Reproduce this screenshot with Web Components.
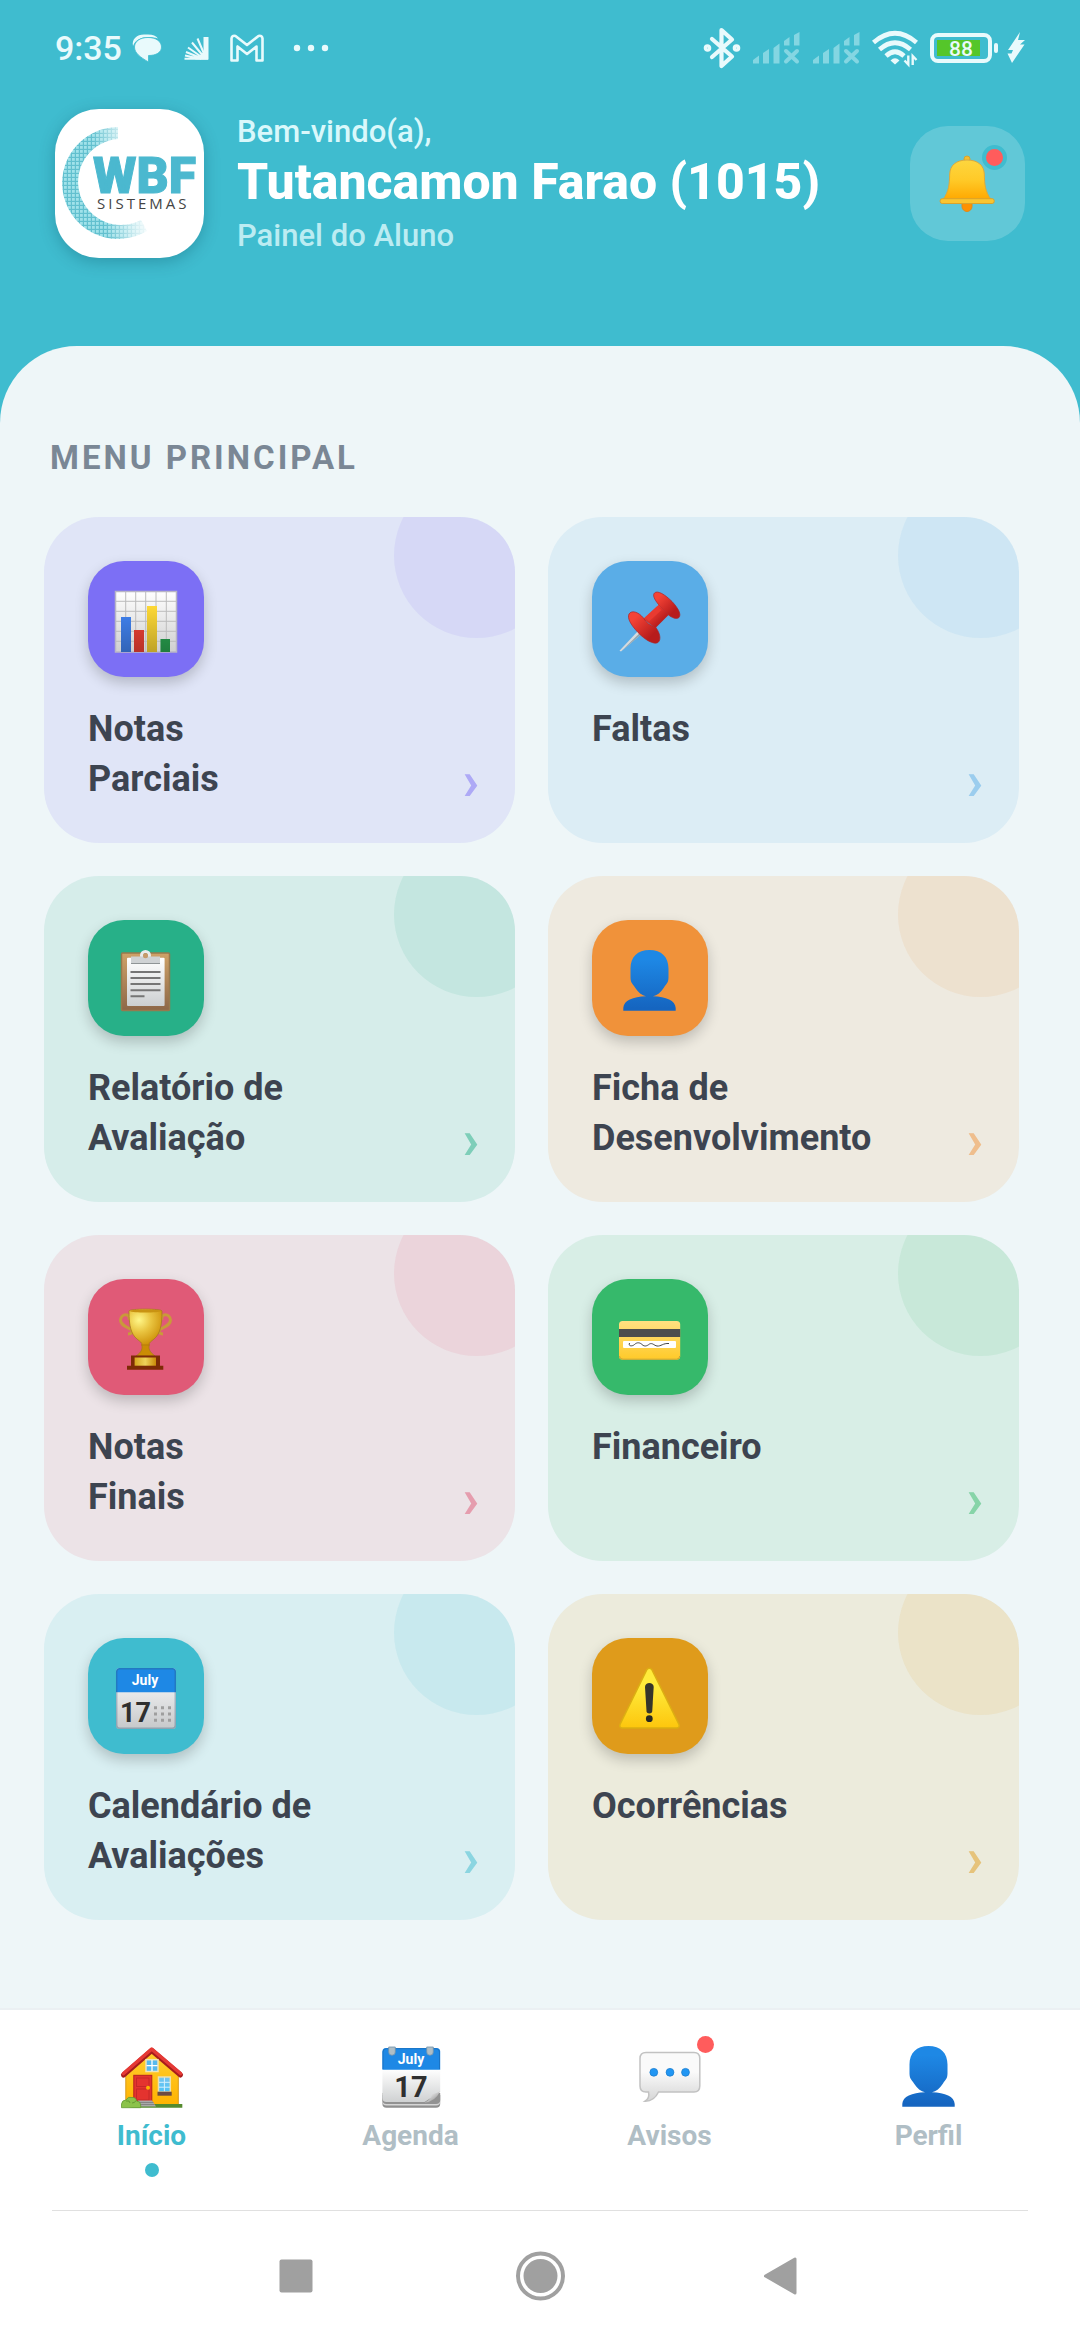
<!DOCTYPE html>
<html lang="pt-BR">
<head>
<meta charset="utf-8">
<meta name="viewport" content="width=device-width, initial-scale=1">
<title>Painel do Aluno</title>
<style>
  body {
    margin: 0;
    min-height: 100vh;
    display: flex;
    flex-direction: column;
    background: #3fbccf;
    font-family: Roboto, "Liberation Sans", sans-serif;
  }
</style>
</head>
<body>

<status-bar time="9:35" battery="88"></status-bar>

<student-header name="Tutancamon Farao (1015)">
  <span slot="greeting">Bem-vindo(a),</span>
  <span slot="role">Painel do Aluno</span>
</student-header>

<menu-sheet>
  <span slot="heading">MENU PRINCIPAL</span>
  <menu-card icon="chart" accent="#7c6ff5" link="#notas-parciais">Notas<br>Parciais</menu-card>
  <menu-card icon="pin" accent="#5aade7" link="#faltas">Faltas</menu-card>
  <menu-card icon="clipboard" accent="#27b088" link="#relatorio">Relatório de<br>Avaliação</menu-card>
  <menu-card icon="person" accent="#f0923a" link="#ficha">Ficha de<br>Desenvolvimento</menu-card>
  <menu-card icon="trophy" accent="#e05a77" link="#notas-finais">Notas<br>Finais</menu-card>
  <menu-card icon="card" accent="#36b96b" link="#financeiro">Financeiro</menu-card>
  <menu-card icon="calendar" accent="#3fbccf" link="#calendario">Calendário de<br>Avaliações</menu-card>
  <menu-card icon="warning" accent="#df9b1b" link="#ocorrencias">Ocorrências</menu-card>
</menu-sheet>

<tab-bar>
  <tab-item icon="house" link="#inicio" active>Início</tab-item>
  <tab-item icon="tearoff" link="#agenda">Agenda</tab-item>
  <tab-item icon="speech" link="#avisos" badge>Avisos</tab-item>
  <tab-item icon="person" link="#perfil">Perfil</tab-item>
</tab-bar>

<system-nav></system-nav>

<script>
// all glyphs share a 64 x 64 box
const GLYPHS = {
  bell: `
    <defs>
      <linearGradient id="g" x1="0" y1="0" x2="0" y2="1"><stop offset="0" stop-color="#fdd63f"/><stop offset=".5" stop-color="#ffca28"/><stop offset="1" stop-color="#ffa800"/></linearGradient>
    </defs>
    <circle cx="31" cy="7" r="3" fill="#f5be2c" stroke="#d9a32c"/>
    <path d="M26 51h10v3.500a5 5 0 0 1-10 0z" fill="#ff9100" stroke="#e08a1c"/>
    <path d="M31 8C20 8 14 13.500 13.700 22C13.300 33 13 39 7 47.500H55C49 39 48.700 33 48.300 22C48 13.500 42 8 31 8Z" fill="url(#g)" stroke="#d9a940"/>
    <rect x="4.200" y="46.700" width="54" height="4.800" rx="2" fill="#fbc530" stroke="#d9a32c"/>`,
  chart: `
    <defs>
      <linearGradient id="p" x1="0" y1="0" x2="0" y2="1"><stop offset="0" stop-color="#fff"/><stop offset="1" stop-color="#cfcfcf"/></linearGradient>
      <linearGradient id="s" x1="0" y1="0" x2="0" y2="1"><stop offset="0" stop-color="#000" stop-opacity="0"/><stop offset="1" stop-color="#000" stop-opacity=".25"/></linearGradient>
    </defs>
    <rect x="1.500" y="1.500" width="61" height="60.500" fill="url(#p)" stroke="#b9b6c6" stroke-width="1.500"/>
    <path d="M11.700 2v60M21.700 2v60M31.700 2v60M42 2v60M52.300 2v60M2 11.300h60M2 21.300h60M2 31.300h60M2 41.300h60M2 51.300h60" stroke="#bcbcbc"/>
    <rect x="7" y="27" width="10" height="35" fill="#4285f4"/>
    <rect x="20" y="40" width="10" height="22" fill="#f44336"/>
    <rect x="33" y="16" width="10" height="46" fill="#fdd835"/>
    <rect x="46.500" y="49" width="9.500" height="13" fill="#2aa852"/>
    <path d="M7 27h10v35H7zM20 40h10v22H20zM33 16h10v46H33zM46.500 49H56v13h-9.500z" fill="url(#s)"/>`,
  pin: `
    <defs>
      <linearGradient id="r" x1="0" y1="0" x2="1" y2="1"><stop offset=".2" stop-color="#f44336"/><stop offset=".75" stop-color="#b71c1c"/></linearGradient>
    </defs>
    <path d="M19.500 41.500L1.500 60.800L3 61.500L23 44.500Z" fill="#d6dbde"/>
    <path d="M21.500 43.300L3 61.500L23 44.500Z" fill="#90a4ae"/>
    <path d="M41 14.500L25 29L37.500 38L50.500 25Z" fill="url(#r)"/>
    <path d="M11 24C13.500 20 20 21.500 25.500 28C28 32.500 32 35.500 37.500 37C42 43 43.500 49.500 40 52.500C36 55 27 50 20 42.500C12.500 34.500 9 28 11 24Z" fill="url(#r)" stroke="#a8252a" stroke-width=".7"/>
    <path d="M36.500 3C39.500 0 47 4.500 54 11.500C60.500 18.500 63.500 24.500 61 27.500C58.500 29.500 54 28 50 24.500L40.500 14.500C36 9 34.500 5 36.500 3Z" fill="url(#r)" stroke="#a8252a" stroke-width=".7"/>
    <path d="M41 15L28 27.500C30 31 33 34.500 36.500 36.500L50 24Z" fill="url(#r)"/>
    <path d="M39 16.500L27.500 27.500L31 31.500L43.500 20Z" fill="#e93a30"/>`,
  clipboard: `
    <defs>
      <linearGradient id="b" x1="0" y1="0" x2="0" y2="1"><stop offset="0" stop-color="#cfa268"/><stop offset="1" stop-color="#8d6748"/></linearGradient>
      <linearGradient id="p" x1="0" y1="0" x2="0" y2="1"><stop offset="0" stop-color="#fff"/><stop offset="1" stop-color="#cccfd1"/></linearGradient>
    </defs>
    <rect x="7.500" y="4" width="48" height="57.500" rx="1" fill="url(#b)" stroke="#96794e" stroke-width="1.500"/>
    <rect x="13" y="8.700" width="37.600" height="48.300" rx="1" fill="url(#p)"/>
    <circle cx="31.500" cy="6.500" r="4" fill="none" stroke="#e8ecec" stroke-width="3"/>
    <rect x="17" y="7.500" width="29" height="7" fill="#cfd2d4"/>
    <circle cx="31.500" cy="6.700" r="2.500" fill="#c69b6b"/>
    <path d="M17 14.500h29" stroke="#8f9496"/>
    <path d="M16.500 23h30M16.500 29h30M16.500 35h30M16.500 41.300h30M16.500 47.300h14" stroke="#757575" stroke-width="2"/>`,
  person: `
    <defs>
      <linearGradient id="u" gradientUnits="userSpaceOnUse" x1="0" y1="1" x2="0" y2="62"><stop offset=".15" stop-color="#1e88e5"/><stop offset=".95" stop-color="#1565c0"/></linearGradient>
    </defs>
    <path d="M31.500 1C19.500 1 12.500 8 12.500 19.500V28.500C12.500 34 15 35 17 38.500C20 43.500 24 46.500 28 47.200C15 47.500 5.500 51.500 5.300 59V61.700H57.700V59C57.500 51.500 48 47.500 35 47.200C39 46.500 43 43.500 46 38.500C48 35 50.500 34 50.500 28.500V19.500C50.500 8 43.500 1 31.500 1Z" fill="url(#u)"/>`,
  trophy: `
    <defs>
      <radialGradient id="c" gradientUnits="userSpaceOnUse" cx="25" cy="12" r="27"><stop offset="0" stop-color="#fff789"/><stop offset=".45" stop-color="#e9c440"/><stop offset="1" stop-color="#cb8c04"/></radialGradient>
      <linearGradient id="l" x1="0" y1="0" x2="1" y2="0"><stop offset="0" stop-color="#d6a61f"/><stop offset=".5" stop-color="#eed25a"/><stop offset="1" stop-color="#c98a08"/></linearGradient>
    </defs>
    <g fill="none" stroke="#c99a3a" stroke-width="3">
      <path d="M15 12C17 5 7 5 6.500 12C6.500 17 12 18.500 17 21.500C20 23.500 17 26 14 26"/>
      <path d="M48 12C46 5 56 5 56.500 12C56.500 17 51 18.500 46 21.500C43 23.500 46 26 49 26"/>
    </g>
    <path d="M15 3C15 .500 48 .500 48 3C48 18 46 26 40 31C37 33.500 35 34.500 35 37V39.500C35 43 38 45.500 41 48H22C25.500 45.500 28 43 28 39.500V37C28 34.500 26 33.500 23 31C17 26 15 18 15 3Z" fill="url(#c)" stroke="#a87b1e" stroke-width=".8"/>
    <path d="M15 3C20 5 43 5 48 3C43 1 20 1 15 3Z" fill="#c99312"/>
    <path d="M27 37h9" stroke="#b67b0c"/>
    <path d="M17 47.500H46V57.700H49.300V61.700H13V57.700H17Z" fill="#7d2b06"/>
    <rect x="20.600" y="49.500" width="21.400" height="8.200" fill="url(#l)"/>`,
  card: `
    <defs>
      <linearGradient id="y" x1="0" y1="0" x2="0" y2="1"><stop offset="0" stop-color="#ffe082"/><stop offset="1" stop-color="#ffca28"/></linearGradient>
    </defs>
    <rect x="1" y="13" width="61.200" height="38.700" rx="3.500" fill="url(#y)"/>
    <path d="M1.500 48Q1.500 51.200 5 51.200H58.500Q61.700 51.200 61.700 48" fill="none" stroke="#c9a53a"/>
    <rect x="1" y="21" width="61.200" height="8" fill="#4d4d4d"/>
    <rect x="5" y="33" width="53" height="7" rx="1" fill="#fff"/>
    <path d="M11.500 35C10 38.500 14.500 38.500 16.500 36.500C19 34 22 34.500 24 36.500C26.500 39 29 38 31.500 36C34.500 34.500 36 37.500 39 38C43 38.500 45 35 51 35.500" fill="none" stroke="#444"/>`,
  calendar: `
    <defs>
      <linearGradient id="p" x1="0" y1="0" x2="0" y2="1"><stop offset="0" stop-color="#fff"/><stop offset="1" stop-color="#c6c8ca"/></linearGradient>
    </defs>
    <rect x="2" y="1" width="60" height="61" rx="3.500" fill="url(#p)"/>
    <path d="M2 25.300V4.500Q2 1 5.500 1H58.500Q62 1 62 4.500V25.300Z" fill="#1e88e5"/>
    <rect x="2.700" y="1.700" width="58.600" height="59.600" rx="3" fill="none" stroke="#2b5f80" stroke-opacity=".35" stroke-width="1.500"/>
    <text x="31" y="18" text-anchor="middle" font-size="14" font-weight="700" fill="#fff">July</text>
    <text x="6" y="55" font-size="27" font-weight="700" fill="#2f2f2f">17</text>
    <path d="M40 40.700h3m4 0h3m4 0h3M40 47h3m4 0h3m4 0h3M40 53.300h3m4 0h3m4 0h3" stroke="#9e9e9e" stroke-width="3"/>`,
  warning: `
    <defs>
      <linearGradient id="w" x1="0" y1="0" x2="0" y2="1"><stop offset=".3" stop-color="#ffeb3b"/><stop offset="1" stop-color="#fdc60d"/></linearGradient>
    </defs>
    <path d="M28.700 2.800Q31.300 -.200 34 2.800L61 57.500Q62 60.700 59 60.900H4Q1 60.700 2 57.500Z" fill="url(#w)" stroke="#dcae12" stroke-width="1.500"/>
    <path d="M27 20C27 14.500 35.700 14.500 35.700 20L34.200 44.500C34 47 28.700 47 28.500 44.500Z" fill="#35352b"/>
    <circle cx="31.300" cy="51.700" r="3.400" fill="#282822"/>`,
  house: `
    <defs>
      <linearGradient id="h" x1="0" y1="0" x2="0" y2="1"><stop offset=".2" stop-color="#ffca28"/><stop offset="1" stop-color="#ffb300"/></linearGradient>
      <linearGradient id="k" x1="0" y1="0" x2="0" y2="1"><stop offset="0" stop-color="#78c4ee"/><stop offset="1" stop-color="#4fc3f7"/></linearGradient>
    </defs>
    <path d="M5.800 27L31.700 5L58.300 27V60H5.800Z" fill="url(#h)" stroke="#d99a1a"/>
    <path d="M3.500 30L31.700 5.500L60.500 30" fill="none" stroke="#a81c1c" stroke-width="5" stroke-linecap="round" stroke-linejoin="round"/>
    <path d="M3.500 28.500L31.700 4L60.500 28.500" fill="none" stroke="#e53935" stroke-width="3.600" stroke-linecap="round" stroke-linejoin="round"/>
    <rect x="26" y="14.700" width="12" height="11.800" fill="#58b9ee" stroke="#efe4b8" stroke-width="1.500"/>
    <path d="M32 15v11M26.500 20.700h11" stroke="#fff" stroke-width="1.300"/>
    <rect x="13.800" y="30.300" width="18" height="26" fill="#e4332f" stroke="#b62020"/>
    <rect x="16.500" y="33" width="12.500" height="8.500" fill="none" stroke="#c62828"/>
    <rect x="16.500" y="44" width="12.500" height="11" fill="none" stroke="#c62828"/>
    <circle cx="28" cy="42.700" r="2" fill="#ffb300"/>
    <rect x="38.500" y="32" width="11.800" height="15" fill="url(#k)" stroke="#ece0b0" stroke-width="1.500"/>
    <path d="M44.400 32.500v14M39 37.300h11M39 42.200h11" stroke="#d6f0fc"/>
    <rect x="37.500" y="46.700" width="14.200" height="4" fill="#6d4c41"/>
    <path d="M33 59H62.300V62.700H8Z" fill="#558b2f"/>
    <path d="M18 55.500H32L36 61.500H18Z" fill="#a9a9a9"/>
    <path d="M18 57.500H33.500M18 59.500H35" stroke="#848484"/>
    <path d="M1.500 62.700V59Q2 55 6 55Q8 51 12 52.500Q16 52 16.500 56Q20.500 56 20.700 60V62.700Z" fill="#8bc34a" stroke="#639c33" stroke-width=".8"/>
    <path d="M6 56Q10 55 10 58M12 58Q15 58 16 55.500" fill="none" stroke="#639c33"/>`,
  tearoff: `
    <defs>
      <linearGradient id="p" x1="0" y1="0" x2="0" y2="1"><stop offset="0" stop-color="#fff"/><stop offset="1" stop-color="#cfd1d2"/></linearGradient>
      <linearGradient id="f" x1="0" y1="0" x2="1" y2="1"><stop offset=".2" stop-color="#f5f5f5"/><stop offset="1" stop-color="#7b7b7b"/></linearGradient>
    </defs>
    <path d="M3.400 50H61.200V58.700Q61.200 62.700 57 62.700H7.500Q3.400 62.700 3.400 58.700Z" fill="#8f8f8f"/>
    <path d="M3.400 50H61.200V56.500Q61.200 60.500 57 60.500H7.500Q3.400 60.500 3.400 56.500Z" fill="#d6d6d6"/>
    <path d="M3.400 48H61.200V55Q61.200 59 57 59H7.500Q3.400 59 3.400 55Z" fill="#929292"/>
    <path d="M3.400 24H61.200V47L45.500 57H7.500Q3.400 57 3.400 53Z" fill="url(#p)"/>
    <path d="M61.200 46.300Q55 49.500 53 49Q52 55 45.700 57.500Q56 57 61.200 46.300Z" fill="url(#f)"/>
    <path d="M3.400 24.700V6.500Q3.400 3 7 3H57.500Q61.200 3 61.200 6.500V24.700Z" fill="#1e88e5"/>
    <path d="M4 24V7Q4 3.700 7.500 3.700H57Q60.500 3.700 60.500 7V24" fill="none" stroke="#1a73c4"/>
    <path d="M9.700 2h6.600V7a3.300 3.300 0 0 1-6.600 0zM47.700 2h6.600V7a3.300 3.300 0 0 1-6.600 0z" fill="#b0bec5" stroke="#6f92ac" stroke-width=".8"/>
    <text x="32" y="18.500" text-anchor="middle" font-size="14" font-weight="700" fill="#fff">July</text>
    <text x="32" y="52" text-anchor="middle" font-size="29" font-weight="700" fill="#2f2f2f">17</text>`,
  speech: `
    <defs>
      <linearGradient id="m" x1="0" y1="0" x2="0" y2="1"><stop offset=".4" stop-color="#fafafa"/><stop offset="1" stop-color="#d5d5d5"/></linearGradient>
    </defs>
    <path d="M8 7.500H56Q61.800 7.500 61.800 13.500V41Q61.800 47 56 47H20.500Q16 56.500 7 56.200Q12 53 10.500 47H8Q2 47 2 41V13.500Q2 7.500 8 7.500Z" fill="url(#m)" stroke="#c2c2c2" stroke-width="1.500"/>
    <g fill="#2196f3" stroke="#1c7fd0" stroke-width=".8"><circle cx="15.800" cy="27.300" r="3.900"/><circle cx="32" cy="27.300" r="3.900"/><circle cx="47.500" cy="27.300" r="3.900"/></g>`
};

class GlyphIcon extends HTMLElement {
  constructor() {
    super();
    this.attachShadow({ mode: "open" });
  }
  connectedCallback() {
    this.shadowRoot.innerHTML = `
<style>
:host { display: block; width: 64px; height: 64px; }
svg { display: block; width: 100%; height: 100%; overflow: visible; }
</style>
<svg viewBox="0 0 64 64" aria-hidden="true">${GLYPHS[this.getAttribute("name")] || ""}</svg>
    `;
  }
}

class StatusBar extends HTMLElement {
  constructor() {
    super();
    this.attachShadow({ mode: "open" });
  }
  connectedCallback() {
    const signal = `
<svg width="48" height="32" viewBox="0 0 48 32" fill="#84d6e2" aria-hidden="true">
  <path d="M1 31.500V28L7 23.500V31.500ZM11 31.500V21L17 17V31.500ZM21.500 31.500V16L27.500 11.500V31.500ZM32 13.500V9L37.500 5V13.500ZM42 13.500V3L47.500 0V13.500Z"/>
  <path d="M34 19L45 29.500M45 19L34 29.500" stroke="#84d6e2" stroke-width="4" stroke-linecap="round"/>
</svg>`;
    this.shadowRoot.innerHTML = `
<style>
:host {
  display: flex;
  justify-content: space-between;
  align-items: center;
  height: 95px;
  padding: 0 55px;
  color: #e9fafc;
}
.side { display: flex; align-items: center; }
.apps { gap: 10px; }
.system { gap: 12px; }
time { font-size: 34px; line-height: 40px; font-weight: 500; }
svg { display: block; overflow: visible; }
.notices { display: flex; align-items: center; gap: 21px; }
.dots { margin-left: 8px; }
.power { display: flex; align-items: center; gap: 9px; }
</style>
<div class="side apps">
  <time>${this.getAttribute("time")}</time>
  <div class="notices">
    <svg width="30" height="28" viewBox="0 0 30 28" fill="currentColor" aria-hidden="true">
      <path d="M1 12C-.5 5 5 .500 12 .500H16C21 .500 24 2 26 4.500C15 1 4 3.500 1 12Z"/>
      <path d="M16 3.500C24 3.500 29.500 7.500 29.500 13C29.500 18.500 24 21.500 16.500 21.500V28C8 23 2.500 19 2.500 13C2.500 7.500 8 3.500 16 3.500Z" stroke="#3fbccf" stroke-width=".8"/>
    </svg>
    <svg width="26" height="24" viewBox="0 0 26 24" fill="currentColor" aria-hidden="true">
      <path d="M20.500 1H25.500V23.500H12L20.500 16Z"/>
      <path d="M22 20L14.500 2.500M21 21L9 6.500M20 22L5 11.500M19 22.500L3 16M18 23L2 19.500M25 22.700L1.500 22.700" stroke="currentColor" stroke-width="2"/>
    </svg>
    <svg width="34" height="28" viewBox="0 0 34 28" fill="none" stroke="currentColor" stroke-width="2.600" stroke-linejoin="round" aria-hidden="true">
      <path d="M1.500 26.500V4.500Q2 1 5.500 2L17 11L28.500 2Q32 1 32.500 4.500V26.500H26.500V12.500L17 20L7.500 12.500V26.500Z"/>
    </svg>
    <svg class="dots" width="36" height="8" viewBox="0 0 36 8" fill="currentColor" aria-hidden="true">
      <circle cx="4" cy="4" r="3.200"/><circle cx="18" cy="4" r="3.200"/><circle cx="32" cy="4" r="3.200"/>
    </svg>
  </div>
</div>
<div class="side system">
  <svg width="36" height="40" viewBox="0 0 36 40" fill="none" stroke="currentColor" stroke-width="4.200" stroke-linejoin="round" stroke-linecap="round" aria-hidden="true">
    <path d="M8 11L28 28.500L17.500 38V2L28 11.500L8 29"/>
    <circle cx="3.500" cy="20" r="1.700"/><circle cx="32.500" cy="20" r="1.700"/>
  </svg>
  ${signal}
  ${signal}
  <svg width="46" height="34" viewBox="0 0 46 34" fill="none" stroke="currentColor" stroke-width="4.600" aria-hidden="true">
    <path d="M1.500 11.500Q23 -7 44.500 11.500M7.500 18.500Q23 5 38.500 18.500M14 25Q23 16.500 32 25"/>
    <path d="M18.500 29.500Q23 25 27.500 29.500L23 33.500Z" fill="currentColor" stroke="none"/>
    <path d="M30.500 28.500H36V24H46V35H34Z" fill="#3fbccf" stroke="none"/>
    <path d="M36.300 24.500V33.500L32.500 29.500M40.700 34V25L44.500 29" stroke-width="2.400"/>
  </svg>
  <div class="power">
    <svg width="68" height="30" viewBox="0 0 68 30" role="img" aria-label="Bateria">
      <rect x="2" y="2" width="58" height="26" rx="6" fill="none" stroke="currentColor" stroke-width="4"/>
      <rect x="64" y="10" width="4" height="10" rx="2" fill="currentColor"/>
      <rect x="7" y="7" width="43" height="16" fill="#55c62a"/>
      <text x="31" y="22.500" text-anchor="middle" font-size="21" font-weight="500" fill="currentColor">${this.getAttribute("battery")}</text>
    </svg>
    <svg width="18" height="31" viewBox="0 0 18 31" fill="currentColor" aria-hidden="true">
      <path d="M13 0L1 18H6L4.500 21.500H.5L5 31L17.500 12.500H13L18 8H11Z"/>
    </svg>
  </div>
</div>
    `;
  }
}

class StudentHeader extends HTMLElement {
  constructor() {
    super();
    this.attachShadow({ mode: "open" });
  }
  connectedCallback() {
    this.shadowRoot.innerHTML = `
<style>
:host {
  display: flex;
  align-items: center;
  gap: 33px;
  padding: 14px 55px 88px;
  color: #fff;
}
.logo {
  flex: none;
  width: 149px;
  height: 149px;
  border-radius: 44px;
  background: #fff;
  box-shadow: 0 4px 16px rgba(0, 60, 80, 0.28);
}
.logo svg { display: block; width: 100%; height: 100%; }
.who { flex: 1; min-width: 0; }
p, h1 { margin: 0; }
p { font-size: 31px; line-height: 38px; font-weight: 500; }
.greeting { color: #d9f8fb; }
.role { color: #bcecf2; }
h1 { margin: 2px 0 6px; font-size: 50px; line-height: 58px; font-weight: 800; }
button {
  position: relative;
  flex: none;
  width: 115px;
  height: 115px;
  padding: 0;
  border: 0;
  border-radius: 38px;
  background: rgba(255, 255, 255, 0.18);
  display: grid;
  place-items: center;
}
.unread {
  position: absolute;
  top: 19px;
  right: 18px;
  width: 17px;
  height: 17px;
  border: 4px solid #3fbccf;
  border-radius: 50%;
  background: #ff5c5c;
}
</style>
<div class="logo">
  <svg viewBox="0 0 149 149" role="img" aria-label="WBF Sistemas">
    <defs>
      <pattern id="mesh" width="4" height="4" patternUnits="userSpaceOnUse">
        <rect width="4" height="4" fill="#62c0cf"/>
        <rect x="1" y="1" width="2.800" height="2.800" fill="#a0e2ea"/>
      </pattern>
      <linearGradient id="fade" gradientUnits="userSpaceOnUse" x1="8" y1="0" x2="90" y2="-12">
        <stop offset=".3" stop-color="#fff"/><stop offset=".6" stop-color="#fff" stop-opacity=".4"/><stop offset=".85" stop-color="#fff" stop-opacity="0"/>
      </linearGradient>
      <mask id="m"><rect width="149" height="149" fill="url(#fade)"/></mask>
    </defs>
    <path mask="url(#m)" fill="url(#mesh)" d="M63 18A56 56 0 1 0 92 122L86 111A43 43 0 1 1 63 30Z"/>
    <text x="38" y="84" font-size="50" font-weight="900" fill="#4bb8cf" stroke="#4bb8cf">WBF</text>
    <text x="42" y="100" font-family="Open Sans, sans-serif" font-size="15" letter-spacing="3" fill="#444">SISTEMAS</text>
  </svg>
</div>
<div class="who">
  <p class="greeting"><slot name="greeting"></slot></p>
  <h1>${this.getAttribute("name")}</h1>
  <p class="role"><slot name="role"></slot></p>
</div>
<button type="button" aria-label="Notificações">
  <glyph-icon name="bell"></glyph-icon>
  <span class="unread"></span>
</button>
    `;
  }
}

class MenuSheet extends HTMLElement {
  constructor() {
    super();
    this.attachShadow({ mode: "open" });
  }
  connectedCallback() {
    this.shadowRoot.innerHTML = `
<style>
:host {
  display: block;
  flex: 1;
  padding: 92px 61px 88px 44px;
  border-radius: 77px 77px 0 0;
  background: #eef6f8;
}
h2 {
  margin: 0 6px 39px;
  font-size: 33px;
  line-height: 40px;
  font-weight: 700;
  letter-spacing: 3px;
  color: #7a8795;
}
.grid { display: grid; grid-template-columns: 1fr 1fr; gap: 33px; }
</style>
<h2><slot name="heading"></slot></h2>
<div class="grid"><slot></slot></div>
    `;
  }
}

class MenuCard extends HTMLElement {
  constructor() {
    super();
    this.attachShadow({ mode: "open" });
  }
  connectedCallback() {
    this.style.setProperty("--accent", this.getAttribute("accent"));
    this.shadowRoot.innerHTML = `
<style>
:host { display: block; }
a {
  position: relative;
  display: block;
  box-sizing: border-box;
  height: 100%;
  padding: 44px 44px 39px;
  border-radius: 55px;
  overflow: hidden;
  text-decoration: none;
  color: #3d4450;
  background: color-mix(in srgb, var(--accent) 12%, transparent);
}
.bubble {
  position: absolute;
  top: -44px;
  right: -44px;
  width: 165px;
  height: 165px;
  border-radius: 50%;
  background: var(--accent);
  opacity: 0.1;
}
.tile {
  box-sizing: border-box;
  width: 116px;
  height: 116px;
  padding: 29px 26px 0;
  border-radius: 36px;
  background: var(--accent);
  box-shadow: 0 6px 14px rgba(0, 0, 0, 0.2);
}
.title {
  display: block;
  min-height: 100px;
  margin-top: 27px;
  font-size: 36px;
  line-height: 50px;
  font-weight: 700;
}
.go {
  position: absolute;
  right: 36px;
  bottom: 31px;
  font-size: 55px;
  line-height: 64px;
  font-weight: 700;
  color: var(--accent);
  opacity: 0.5;
}
</style>
<a href="${this.getAttribute("link")}">
  <div class="bubble"></div>
  <div class="tile"><glyph-icon name="${this.getAttribute("icon")}"></glyph-icon></div>
  <span class="title"><slot></slot></span>
  <span class="go" aria-hidden="true">›</span>
</a>
    `;
  }
}

class TabBar extends HTMLElement {
  constructor() {
    super();
    this.attachShadow({ mode: "open" });
  }
  connectedCallback() {
    this.shadowRoot.innerHTML = `
<style>
:host { display: block; background: #fff; border-top: 2px solid #ebf0f3; }
nav { display: flex; padding: 35px 22px 33px; }
</style>
<nav><slot></slot></nav>
    `;
  }
}

class TabItem extends HTMLElement {
  constructor() {
    super();
    this.attachShadow({ mode: "open" });
  }
  connectedCallback() {
    this.shadowRoot.innerHTML = `
<style>
:host { display: block; flex: 1; color: #b0bec5; }
:host([active]) { color: #3fbccf; }
a {
  display: flex;
  flex-direction: column;
  align-items: center;
  gap: 10px;
  text-decoration: none;
  color: inherit;
  font-size: 28px;
  line-height: 34px;
  font-weight: 700;
}
.icon { position: relative; }
.badge {
  position: absolute;
  top: -9px;
  right: -12px;
  width: 17px;
  height: 17px;
  border-radius: 50%;
  background: #ff5c5c;
}
.mark { width: 14px; height: 14px; border-radius: 50%; }
:host([active]) .mark { background: currentColor; }
</style>
<a href="${this.getAttribute("link")}">
  <div class="icon">
    <glyph-icon name="${this.getAttribute("icon")}"></glyph-icon>
    ${this.hasAttribute("badge") ? `<span class="badge"></span>` : ""}
  </div>
  <slot></slot>
  <span class="mark"></span>
</a>
    `;
  }
}

class SystemNav extends HTMLElement {
  constructor() {
    super();
    this.attachShadow({ mode: "open" });
  }
  connectedCallback() {
    this.shadowRoot.innerHTML = `
<style>
:host { display: block; background: #fff; padding: 0 52px; }
nav {
  display: flex;
  justify-content: center;
  align-items: center;
  gap: 192px;
  height: 129px;
  border-top: 1px solid #e0e0e0;
}
button { width: 50px; height: 50px; padding: 0; border: 0; background: none; color: #a0a0a0; }
svg { display: block; width: 50px; height: 50px; }
</style>
<nav>
  <button type="button" aria-label="Recentes">
    <svg viewBox="0 0 50 50" fill="currentColor"><rect x="6.500" y="8.500" width="33" height="33" rx="2"/></svg>
  </button>
  <button type="button" aria-label="Tela inicial">
    <svg viewBox="0 0 50 50"><circle cx="25.500" cy="25" r="22.500" fill="none" stroke="currentColor" stroke-width="4"/><circle cx="25.500" cy="25" r="17" fill="currentColor"/></svg>
  </button>
  <button type="button" aria-label="Voltar">
    <svg viewBox="0 0 50 50" fill="currentColor" stroke="currentColor" stroke-width="3" stroke-linejoin="round"><path d="M8.500 25L38 8V42Z"/></svg>
  </button>
</nav>
    `;
  }
}

customElements.define('glyph-icon', GlyphIcon);
customElements.define('status-bar', StatusBar);
customElements.define('student-header', StudentHeader);
customElements.define('menu-sheet', MenuSheet);
customElements.define('menu-card', MenuCard);
customElements.define('tab-bar', TabBar);
customElements.define('tab-item', TabItem);
customElements.define('system-nav', SystemNav);
</script>
</body>
</html>
